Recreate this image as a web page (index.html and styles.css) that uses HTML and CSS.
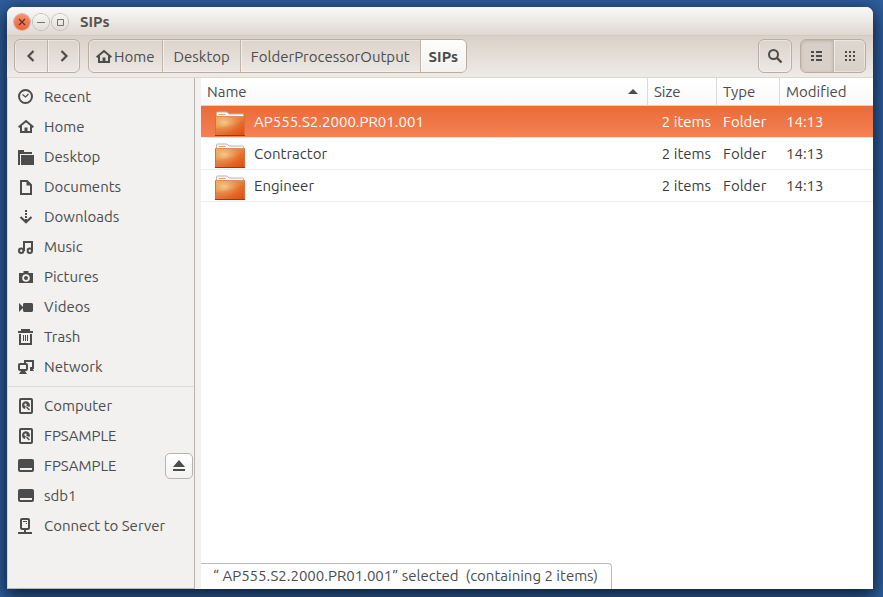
FILE: index.html
```html
<!DOCTYPE html>
<html lang="en">
<head>
<meta charset="utf-8">
<title>SIPs</title>
<link rel="stylesheet" href="styles.css">
</head>
<body>
<svg class="defs" aria-hidden="true">
  <defs>
    <linearGradient id="folder-base" x1="0" y1="0" x2="1" y2="1">
      <stop offset="0" stop-color="#e9a862"/><stop offset="0.5" stop-color="#e5803e"/><stop offset="1" stop-color="#e8480f"/>
    </linearGradient>
    <radialGradient id="folder-glow" cx="0.3" cy="0.3" r="0.6">
      <stop offset="0" stop-color="#f6d49a" stop-opacity="0.85"/><stop offset="1" stop-color="#f0a050" stop-opacity="0"/>
    </radialGradient>
    <symbol id="i-home" viewBox="0 0 16 16">
      <path d="M0.6 8.2 8 2l7.4 6.2" fill="none" stroke="currentColor" stroke-width="2"/>
      <path d="M3 7v6h10V7" fill="none" stroke="currentColor" stroke-width="2"/>
      <path d="M6.5 8.500h3V13h-3z" fill="currentColor"/>
    </symbol>
    <symbol id="i-drive" viewBox="0 0 16 16">
      <rect x="2" y="1" width="12" height="14" rx="1" fill="none" stroke="currentColor" stroke-width="2"/>
      <path d="M7.500 3.200a4 4 0 0 0-.500 7.800L7.500 8.500 9 8l2.500 1A4 4 0 0 0 7.500 3.200z" fill="currentColor"/>
      <circle cx="7.500" cy="6.700" r="1.200" fill="#f2f1f0"/>
      <path d="M8.500 9l3 3" stroke="currentColor" stroke-width="1.500"/>
    </symbol>
    <symbol id="i-removable" viewBox="0 0 16 16">
      <path d="M2 1h12a2 2 0 0 1 2 2v9a2 2 0 0 1-2 2H2a2 2 0 0 1-2-2V3a2 2 0 0 1 2-2zM2 10v2h12v-2z" fill="currentColor" fill-rule="evenodd"/>
    </symbol>
    <symbol id="i-folder" viewBox="0 0 30 26">
      <path d="M1.500 7V2q0-1 1-1h9.500l2 2h14q.500 0 .500.500V7z" fill="#fafafa" stroke="#b9b6b3"/>
      <path d="M3.500 3.500h7" stroke="#e9a06c"/>
      <path d="M.500 5.500h29v19h-29z" fill="url(#folder-base)" stroke="#d9703c"/>
      <path d="M1 6h28v18H1z" fill="url(#folder-glow)"/>
      <path d="M1 17Q20 15 29 9v15H1z" fill="#dd4812" opacity="0.16"/>
      <path d="M1 5.500h28" stroke="#dd8d66"/>
      <path d="M0 24.500h30" stroke="#a93214"/>
    </symbol>
  </defs>
</svg>

<div class="window">
  <header class="titlebar">
    <button class="wm close" aria-label="Close"><svg viewBox="0 0 16 16"><path d="M5 5l6 6M11 5l-6 6"/></svg></button>
    <button class="wm" aria-label="Minimize"><svg viewBox="0 0 16 16"><path d="M4 8.500h8"/></svg></button>
    <button class="wm" aria-label="Maximize"><svg viewBox="0 0 16 16"><path d="M5.500 5.500h6v6h-6z"/></svg></button>
    <h1>SIPs</h1>
  </header>

  <div class="toolbar">
    <div class="group">
      <button aria-label="Back"><svg class="icon" viewBox="0 0 16 16"><path d="M10.500 3l-5 5 5 5" fill="none" stroke="currentColor" stroke-width="2.200"/></svg></button>
      <button aria-label="Forward"><svg class="icon" viewBox="0 0 16 16"><path d="M5.500 3l5 5-5 5" fill="none" stroke="currentColor" stroke-width="2.200"/></svg></button>
    </div>
    <nav class="group path" aria-label="Location">
      <button><svg class="icon"><use href="#i-home"/></svg>Home</button>
      <button>Desktop</button>
      <button>FolderProcessorOutput</button>
      <button class="current">SIPs</button>
    </nav>
    <div class="group search">
      <button aria-label="Search"><svg class="icon" viewBox="0 0 16 16"><circle cx="6.500" cy="6.500" r="4.500" fill="none" stroke="currentColor" stroke-width="2"/><path d="M9.500 9.500l5 5" stroke="currentColor" stroke-width="2.400"/></svg></button>
    </div>
    <div class="group views">
      <button class="pressed" aria-label="List view"><svg class="icon" viewBox="0 0 16 16"><path d="M2 3h3v2H2zM7 3h6v2H7zM2 7h3v2H2zM7 7h6v2H7zM2 11h3v2H2zM7 11h6v2H7z" fill="currentColor"/></svg></button>
      <button aria-label="Icon view"><svg class="icon" viewBox="0 0 16 16"><path d="M3 3h2v2H3zM7 3h2v2H7zM11 3h2v2h-2zM3 7h2v2H3zM7 7h2v2H7zM11 7h2v2h-2zM3 11h2v2H3zM7 11h2v2H7zM11 11h2v2h-2z" fill="currentColor"/></svg></button>
    </div>
  </div>

  <div class="content">
    <aside class="sidebar">
      <ul>
        <li><a href="#"><svg class="icon" viewBox="0 0 16 16"><circle cx="7.500" cy="7.500" r="6.500" fill="none" stroke="currentColor" stroke-width="2"/><path d="M4.500 5.500l3 2.500 3-3" fill="none" stroke="currentColor" stroke-width="1.200"/></svg>Recent</a></li>
        <li><a href="#"><svg class="icon"><use href="#i-home"/></svg>Home</a></li>
        <li><a href="#"><svg class="icon" viewBox="0 0 16 16"><path d="M0 1h6v2h8v2H2v11H0zM3 6h13v10H3z" fill="currentColor"/></svg>Desktop</a></li>
        <li><a href="#"><svg class="icon" viewBox="0 0 16 16"><path d="M3 2h6l4 4v9H3z" fill="none" stroke="currentColor" stroke-width="2"/><path d="M8.500 2v4.500H13z" fill="currentColor"/></svg>Documents</a></li>
        <li><a href="#"><svg class="icon" viewBox="0 0 16 16"><path d="M7 1h2v2H7zM7 4h2v2H7zM7 7h2v2H7zM7 10h2v3H7z" fill="currentColor"/><path d="M2.500 8 8 13.200 13.500 8" fill="none" stroke="currentColor" stroke-width="2.200"/></svg>Downloads</a></li>
        <li><a href="#"><svg class="icon" viewBox="0 0 16 16"><g fill="none" stroke="currentColor" stroke-width="2"><circle cx="3.200" cy="11.800" r="2.200"/><circle cx="11.800" cy="11.800" r="2.200"/><path d="M6 12V3h8v9"/></g></svg>Music</a></li>
        <li><a href="#"><svg class="icon" viewBox="0 0 16 16"><path d="M5.500 2h5v2H15v10H1V4h4.500zM8 5.200a3.800 3.800 0 1 0 0 7.600 3.800 3.800 0 0 0 0-7.600zM8 7a2 2 0 1 1 0 4 2 2 0 0 1 0-4z" fill="currentColor" fill-rule="evenodd"/></svg>Pictures</a></li>
        <li><a href="#"><svg class="icon" viewBox="0 0 16 16"><path d="M1 4l4 4v1l-4 4zM6 4h8l1 1v7l-1 1H6l-1-1V5z" fill="currentColor"/></svg>Videos</a></li>
        <li><a href="#"><svg class="icon" viewBox="0 0 16 16"><path d="M0 3h15M4 2.500V1h7v1.500M2 5v10h11V5" fill="none" stroke="currentColor" stroke-width="2"/><path d="M5.500 6v6M7.500 6v6M9.500 6v6" stroke="currentColor"/></svg>Trash</a></li>
        <li><a href="#"><svg class="icon" viewBox="0 0 16 16"><path d="M7 4V2h8v7h-3" fill="none" stroke="currentColor" stroke-width="2"/><path d="M12 9h2l2 3h-4z" fill="currentColor"/><rect x="1" y="5" width="8" height="6" rx="1" fill="#f2f1f0" stroke="currentColor" stroke-width="2"/><path d="M3 12h4l2 3H1z" fill="currentColor"/></svg>Network</a></li>
      </ul>
      <ul>
        <li><a href="#"><svg class="icon"><use href="#i-drive"/></svg>Computer</a></li>
        <li><a href="#"><svg class="icon"><use href="#i-drive"/></svg>FPSAMPLE</a></li>
        <li><a href="#"><svg class="icon"><use href="#i-removable"/></svg>FPSAMPLE</a><button class="eject" aria-label="Eject FPSAMPLE"><svg class="icon" viewBox="0 0 16 16"><path d="M8 2l6 7H2zM2 11h12v2H2z" fill="currentColor"/></svg></button></li>
        <li><a href="#"><svg class="icon"><use href="#i-removable"/></svg>sdb1</a></li>
        <li><a href="#"><svg class="icon" viewBox="0 0 16 16"><rect x="3" y="1" width="8" height="10" rx="1" fill="none" stroke="currentColor" stroke-width="2"/><path d="M5 3.500h4M8 5.500h1" stroke="currentColor"/><path d="M6 11h2v3h6v2H0v-2h6z" fill="currentColor"/></svg>Connect to Server</a></li>
      </ul>
    </aside>

    <main class="files">
      <table>
        <colgroup><col><col class="c-size"><col class="c-type"><col class="c-modified"></colgroup>
        <thead>
          <tr>
            <th aria-sort="ascending"><div class="sorted">Name<svg class="arrow" viewBox="0 0 10 6"><path d="M5 0l5 5H0z" fill="currentColor"/></svg></div></th>
            <th>Size</th><th>Type</th><th>Modified</th>
          </tr>
        </thead>
        <tbody>
          <tr class="selected"><td><div class="name"><svg class="folder"><use href="#i-folder"/></svg>AP555.S2.2000.PR01.001</div></td><td class="size">2 items</td><td>Folder</td><td>14:13</td></tr>
          <tr><td><div class="name"><svg class="folder"><use href="#i-folder"/></svg>Contractor</div></td><td class="size">2 items</td><td>Folder</td><td>14:13</td></tr>
          <tr><td><div class="name"><svg class="folder"><use href="#i-folder"/></svg>Engineer</div></td><td class="size">2 items</td><td>Folder</td><td>14:13</td></tr>
        </tbody>
      </table>
      <div class="status" role="status">“ AP555.S2.2000.PR01.001” selected&nbsp; (containing 2 items)</div>
    </main>
  </div>
</div>
</body>
</html>
```
FILE: styles.css
```css
* {
  box-sizing: border-box;
}

body {
  margin: 0;
  height: 100vh;
  padding: 7px 10px 8px 7px;
  display: flex;
  overflow: hidden;
  background: #2f5f9e;
  color: #4c4c4c;
  font: 15px/20px Ubuntu, "Noto Sans", sans-serif;
}

button {
  margin: 0;
  padding: 0;
  border: 0;
  background: none;
  color: inherit;
  font: inherit;
}

.defs {
  position: absolute;
  width: 0;
  height: 0;
}

.icon {
  width: 16px;
  height: 16px;
  flex: none;
  display: block;
}

.window {
  flex: 1;
  min-width: 0;
  display: flex;
  flex-direction: column;
  border-radius: 7px 7px 0 0;
  background: #f2f1f0;
  box-shadow: 0 5px 18px 2px rgba(5, 12, 25, 0.8);
}

/* Title bar */
.titlebar {
  display: flex;
  align-items: center;
  gap: 3px;
  height: 29px;
  padding: 1px 7px 0;
  border-radius: 7px 7px 0 0;
  border-bottom: 1px solid #d3cbc2;
  background: linear-gradient(#faf9f8, #dfd8d1);
}

.titlebar h1 {
  margin: 0 0 0 9px;
  font-size: 15px;
  font-weight: 700;
  color: #5a534d;
}

.wm {
  width: 16px;
  height: 16px;
  border-radius: 50%;
  background: linear-gradient(#f8f6f4, #e2ddd8);
  box-shadow: 0 0 0 1px #c4bdb6;
}

.wm svg {
  display: block;
  fill: none;
  stroke: #79716a;
}

.wm.close {
  background: linear-gradient(#f49271, #ea6338);
  box-shadow: 0 0 0 1px #cdb3a8;
}

.wm.close svg {
  stroke: #66321f;
  stroke-width: 1.3;
}

/* Toolbar */
.toolbar {
  display: flex;
  align-items: center;
  gap: 8px;
  height: 42px;
  padding: 0 7px 1px;
  border-bottom: 1px solid #dfd6cd;
  background: linear-gradient(#dad0c7, #efebe7);
}

.group {
  display: flex;
  height: 34px;
  border: 1px solid #b9ada1;
  border-radius: 6px;
  box-shadow: inset 0 0 0 1px rgba(255, 255, 255, 0.4);
}

.group button {
  display: flex;
  align-items: center;
  justify-content: center;
  width: 32px;
}

.group button + button {
  border-left: 1px solid #bfb4a9;
  box-shadow: inset 1px 0 rgba(255, 255, 255, 0.5);
}

.path button,
.path button + button {
  width: auto;
  padding: 1px 10px 0;
}

.path button:first-child {
  padding: 1px 8px 0 7px;
  gap: 2px;
}

.path button.current {
  padding: 1px 8px 0;
  border-radius: 0 5px 5px 0;
  background: linear-gradient(#fdfdfc, #f4f2f0);
  font-weight: 700;
}

.search {
  margin-left: auto;
}

.views {
  background: linear-gradient(#dfd7cf, #d9d0c8);
}

.views .pressed {
  border-radius: 5px 0 0 5px;
  background: #d8d0c8;
  box-shadow: inset 0 1px 3px rgba(90, 75, 60, 0.25);
}

/* Sidebar */
.content {
  flex: 1;
  min-height: 0;
  display: flex;
  gap: 6px;
}

.sidebar {
  flex: 0 0 188px;
  border: 1px solid #b8b5b2;
  border-top: 0;
  border-left-color: #d8d5d2;
}

.sidebar ul {
  margin: 0;
  padding: 4px 0;
  list-style: none;
}

.sidebar ul + ul {
  border-top: 1px solid #dddbd9;
}

.sidebar li {
  display: flex;
  align-items: center;
  height: 30px;
  padding: 0 1px 0 10px;
}

.sidebar a {
  flex: 1;
  display: flex;
  align-items: center;
  gap: 10px;
  color: inherit;
  text-decoration: none;
}

.eject {
  display: flex;
  align-items: center;
  justify-content: center;
  width: 28px;
  height: 26px;
  border: 1px solid #b6b3b0;
  border-radius: 5px;
  background: linear-gradient(#fff, #f3f2f1);
}

/* File list */
.files {
  position: relative;
  flex: 1;
  min-width: 0;
  background: #fff;
}

table {
  width: 100%;
  table-layout: fixed;
  border-collapse: separate;
  border-spacing: 0;
}

.c-size {
  width: 69px;
}

.c-type {
  width: 63px;
}

.c-modified {
  width: 94px;
}

th,
td {
  padding: 0 6px;
  text-align: left;
  white-space: nowrap;
}

th {
  height: 28px;
  border-bottom: 1px solid #d4d1cf;
  background: linear-gradient(#fff, #f9f9f9);
  font-weight: 400;
}

th + th {
  border-left: 1px solid #dddbd9;
}

td {
  height: 32px;
  border-bottom: 1px solid #eeeded;
  color: #3c3c3c;
}

td + td {
  padding-left: 7px;
}

td.size {
  padding-right: 5px;
  text-align: right;
}

.sorted {
  display: flex;
  align-items: center;
  justify-content: space-between;
  padding-right: 3px;
}

.arrow {
  width: 10px;
  height: 6px;
}

.name {
  display: flex;
  align-items: center;
  gap: 9px;
  padding-left: 8px;
}

.folder {
  width: 30px;
  height: 26px;
  margin-top: 4px;
}

.selected td {
  background: linear-gradient(#e96c39, #f58052);
  background-clip: padding-box;
  color: #fff;
}

.status {
  position: absolute;
  left: 0;
  bottom: 0;
  padding: 2px 13px 3px 12px;
  border: 1px solid #bdbab8;
  border-width: 1px 1px 0 0;
  border-radius: 0 4px 0 0;
  background: #fff;
}
```
